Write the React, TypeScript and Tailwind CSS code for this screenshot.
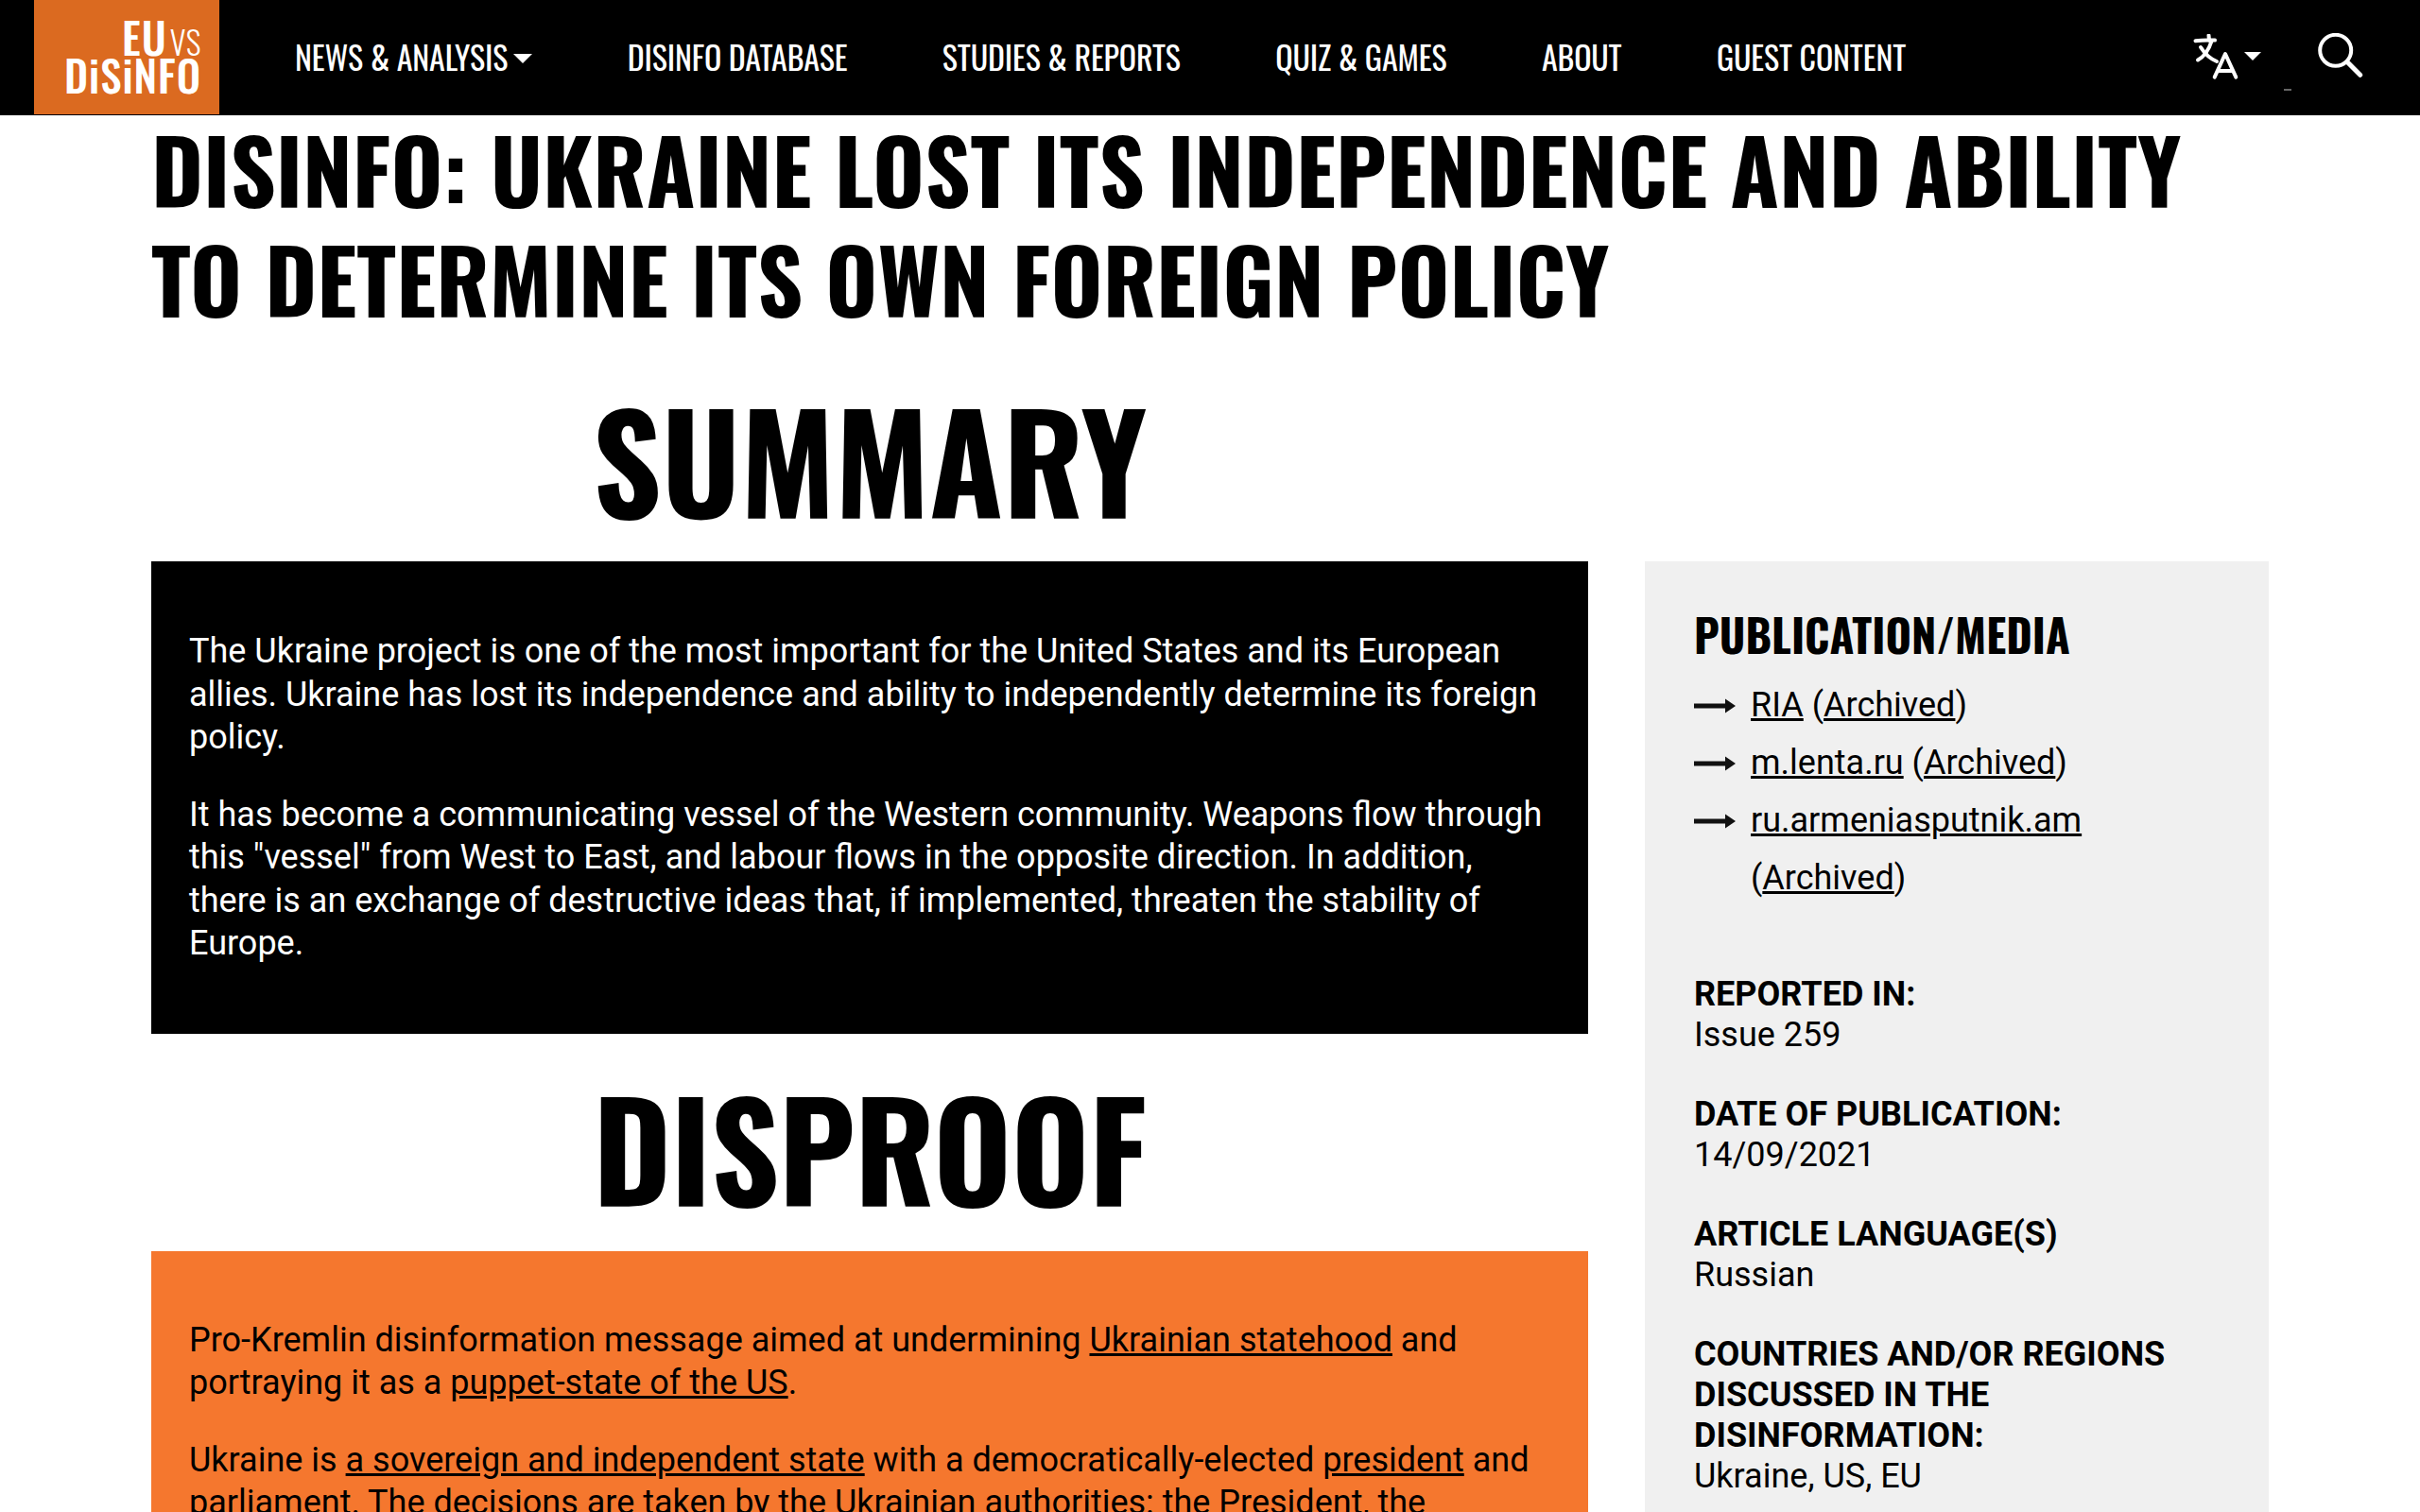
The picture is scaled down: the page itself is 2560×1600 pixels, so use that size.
function Caret({ className }: { className?: string }) {
  return (
    <svg viewBox="0 0 20 10" className={className} fill="currentColor" aria-hidden="true">
      <path d="M0 0h20L10 10z" />
    </svg>
  );
}

function Arrow() {
  return (
    <svg viewBox="0 0 44 20" className="absolute left-[-60px] top-[21px] h-5 w-[44px]" aria-hidden="true">
      <path d="M0 7.4h35v5.2H0z" fill="#111" />
      <path d="M33 2.5 44 10 33 17.5z" fill="#111" />
    </svg>
  );
}

function Meta({ label, value }: { label: string; value: string }) {
  return (
    <div className="mb-[41px] leading-[43px]">
      <div className="font-bold">{label}</div>
      <div>{value}</div>
    </div>
  );
}

const nav = ["DISINFO DATABASE", "STUDIES & REPORTS", "QUIZ & GAMES", "ABOUT", "GUEST CONTENT"];

export default function App() {
  return (
    <div className="h-[1600px] overflow-hidden bg-white font-['Roboto',sans-serif] text-[36px] leading-[45.5px] text-black">
      <header className="flex h-[122px] items-center bg-black pl-9 pr-[60px] text-white">
        <div className="flex h-[121px] w-[196px] shrink-0 flex-col items-end self-start bg-[#db6a20] pr-[19px] pt-[18px] font-['Oswald',sans-serif]">
          <div className="flex h-10 items-baseline gap-[3px]">
            <span className="text-[46px] font-medium leading-10 tracking-[1px]">EU</span>
            <span className="text-[34px] font-light leading-10 tracking-[0.5px]">VS</span>
          </div>
          <div className="text-[45px] font-medium leading-[42px] tracking-[1px]">DiSiNFO</div>
        </div>
        <nav className="mb-[3px] ml-20 flex items-center gap-[100.5px] font-['Oswald',sans-serif] text-[34px] leading-10 tracking-[-0.15px]">
          <span className="flex items-center gap-[6px]">
            NEWS &amp; ANALYSIS
            <Caret className="mt-1 h-[10px] w-5" />
          </span>
          {nav.map((n) => (
            <span key={n}>{n}</span>
          ))}
        </nav>
        <div className="ml-auto flex items-center">
          <svg viewBox="0 0 50 50" className="h-[50px] w-[50px]" fill="none" stroke="currentColor" strokeWidth="4" strokeLinecap="round" strokeLinejoin="round" aria-hidden="true">
            <path d="M2.5 7.2Q12 6 23 6.6" />
            <path d="M16.5 1.5 17 6.8" />
            <path d="M19.5 7.5Q15 22 5 27.5" />
            <path d="M8 14Q15 25 25 29" />
            <path d="M22.7 45.7 34 21 45.3 45.7" />
            <path d="M26.7 39H40.7" />
          </svg>
          <Caret className="ml-1 mt-[-3px] h-[9px] w-[18px]" />
          <div className="ml-[24px] mt-[67px] h-[2px] w-2 bg-[#666]" />
          <svg viewBox="0 0 48 48" className="ml-[28px] mt-[-4px] h-[48px] w-[48px]" fill="none" stroke="currentColor" strokeWidth="4" strokeLinecap="round" aria-hidden="true">
            <circle cx="18.7" cy="18.3" r="16.5" />
            <path d="M31 30.5 44.7 44.3" strokeWidth="5" />
          </svg>
        </div>
      </header>

      <main className="px-[160px]">
        <h1 className="mt-[-2px] font-['Oswald',sans-serif] text-[94px] font-bold leading-[116px]">
          DISINFO: UKRAINE LOST ITS INDEPENDENCE AND ABILITY TO DETERMINE ITS OWN FOREIGN POLICY
        </h1>
        <div className="mt-[24px] flex gap-[60px]">
          <div className="w-[1520px] shrink-0">
            <h2 className="py-[11px] text-center font-['Oswald',sans-serif] text-[142px] font-bold leading-[196px]">SUMMARY</h2>
            <section className="bg-black px-10 pb-[72px] pt-[73px] text-white">
              <p className="mb-[36px]">
                The Ukraine project is one of the most important for the United States and its European allies. Ukraine has lost its independence and ability to independently determine its foreign policy.
              </p>
              <p>
                It has become a communicating vessel of the Western community. Weapons flow through this "vessel" from West to East, and labour flows in the opposite direction. In addition, there is an exchange of destructive ideas that, if implemented, threaten the stability of Europe.
              </p>
            </section>
            <h2 className="pb-[13px] pt-[21px] text-center font-['Oswald',sans-serif] text-[142px] font-bold leading-[196px] tracking-[-0.8px]">DISPROOF</h2>
            <section className="bg-[#f5772e] px-10 py-[72px]">
              <p className="mb-[36px]">
                Pro-Kremlin disinformation message aimed at undermining <a className="underline">Ukrainian statehood</a> and portraying it as a <a className="underline">puppet-state of the US</a>.
              </p>
              <p>
                Ukraine is <a className="underline">a sovereign and independent state</a> with a democratically-elected <a className="underline">president</a> and parliament. The decisions are taken by the Ukrainian authorities: the President, the
              </p>
            </section>
          </div>
          <aside className="mt-[218px] w-[660px] shrink-0 self-start bg-[#f0f0f0] pb-10 pl-[52px] pr-[53px] pt-[43px]">
            <h3 className="font-['Oswald',sans-serif] text-[47px] font-bold leading-[68px]">PUBLICATION/MEDIA</h3>
            <ul className="mb-[71px] mt-[11px] pl-[60px] leading-[61px]">
              <li className="relative"><Arrow /><a className="underline">RIA</a> (<a className="underline">Archived</a>)</li>
              <li className="relative"><Arrow /><a className="underline">m.lenta.ru</a> (<a className="underline">Archived</a>)</li>
              <li className="relative"><Arrow /><a className="underline">ru.armeniasputnik.am</a> (<a className="underline">Archived</a>)</li>
            </ul>
            <Meta label="REPORTED IN:" value="Issue 259" />
            <Meta label="DATE OF PUBLICATION:" value="14/09/2021" />
            <Meta label="ARTICLE LANGUAGE(S)" value="Russian" />
            <Meta label="COUNTRIES AND/OR REGIONS DISCUSSED IN THE DISINFORMATION:" value="Ukraine, US, EU" />
          </aside>
        </div>
      </main>
    </div>
  );
}
